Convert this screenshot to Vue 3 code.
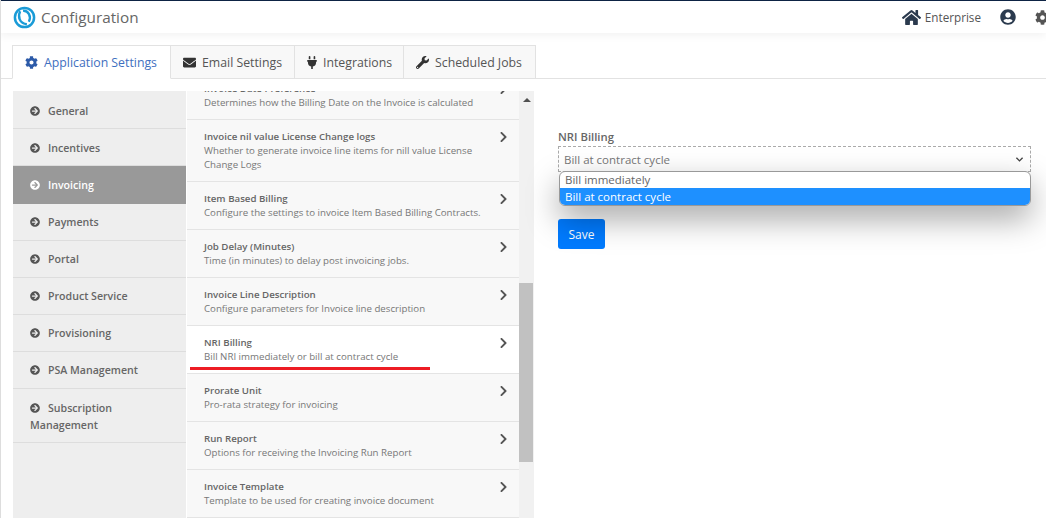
<template>
  <div class="page">
    <header class="topbar">
      <svg class="logo" viewBox="0 0 24 24" fill="none" stroke="#1a9bd7">
        <circle cx="12" cy="12" r="10" stroke-width="2.6" />
        <path d="M7.500 5.500C4.500 11 7 18.500 14.500 19" stroke-width="2.400" />
        <path d="M10.500 5C16 4.500 19.500 11 16.500 16.500" stroke-width="2.400" />
      </svg>
      <span class="brand">Configuration</span>
      <div class="topright">
        <svg class="ico home" :viewBox="icons.home.box"><path :d="icons.home.d" /></svg>
        <span class="org">Enterprise</span>
        <svg class="ico user" :viewBox="icons.user.box"><path :d="icons.user.d" /></svg>
        <svg class="ico gear" :viewBox="icons.cog.box"><path :d="icons.cog.d" /></svg>
      </div>
    </header>

    <nav class="tabs">
      <div v-for="t in tabs" :key="t.label" class="tab" :class="{ active: t.active }" :style="{ width: t.width + 'px' }">
        <svg class="ico tabico" :viewBox="icons[t.icon].box" :style="{ width: t.iconWidth + 'px' }"><path :d="icons[t.icon].d" /></svg>
        <span>{{ t.label }}</span>
      </div>
    </nav>

    <main class="content">
      <aside class="side">
        <div v-for="s in sections" :key="s.label" class="sideitem" :class="{ active: s.active }">
          <svg class="ico arrow" :viewBox="icons.arrow.box"><path :d="icons.arrow.d" /></svg>{{ s.label }}
        </div>
      </aside>

      <section class="listwrap">
        <div class="list">
          <div v-for="r in rows" :key="r.title" class="row" :class="{ current: r.current }">
            <div class="rowtext">
              <div class="rowtitle">{{ r.title }}</div>
              <div class="rowdesc">{{ r.desc }}</div>
            </div>
            <svg class="ico chev" :viewBox="icons.chev.box"><path :d="icons.chev.d" /></svg>
            <div v-if="r.current" class="redline"></div>
          </div>
        </div>
      </section>

      <div class="scrollbar">
        <div class="uparrow"></div>
        <div class="thumb"></div>
      </div>

      <section class="detail">
        <div class="label">NRI Billing</div>
        <div class="selectbox">
          <div class="select">
            <span>Bill at contract cycle</span>
            <svg class="caret" viewBox="0 0 16 16" fill="none" stroke="#444" stroke-width="2">
              <path d="M3.500 5.500 8 10l4.500-4.500" />
            </svg>
          </div>
          <div class="dropdown">
            <div class="opt">Bill immediately</div>
            <div class="opt picked">Bill at contract cycle</div>
          </div>
        </div>
        <button class="save">Save</button>
      </section>
    </main>
  </div>
</template>

<script setup>
const icons = {
  home: {
    box: "0 0 576 512",
    d: "M280.37 148.26L96 300.11V464a16 16 0 0 0 16 16l112.06-.29a16 16 0 0 0 15.92-16V368a16 16 0 0 1 16-16h64a16 16 0 0 1 16 16v95.64a16 16 0 0 0 16 16.05L464 480a16 16 0 0 0 16-16V300L295.67 148.26a12.19 12.19 0 0 0-15.3 0zM571.6 251.47L488 182.56V44.05a12 12 0 0 0-12-12h-56a12 12 0 0 0-12 12v72.61L318.47 43a48 48 0 0 0-61 0L4.34 251.47a12 12 0 0 0-1.6 16.9l25.5 31A12 12 0 0 0 45.15 301l235.22-193.74a12.19 12.19 0 0 1 15.3 0L530.9 301a12 12 0 0 0 16.9-1.6l25.5-31a12 12 0 0 0-1.7-16.93z",
  },
  user: {
    box: "0 0 496 512",
    d: "M248 8C111 8 0 119 0 256s111 248 248 248 248-111 248-248S385 8 248 8zm0 96c48.6 0 88 39.4 88 88s-39.4 88-88 88-88-39.4-88-88 39.4-88 88-88zm0 344c-58.7 0-111.3-26.6-146.5-68.2 18.8-35.4 55.6-59.8 98.5-59.8 2.4 0 4.8.4 7.1 1.1 13 4.2 26.6 6.9 40.9 6.9 14.3 0 28-2.7 40.9-6.9 2.3-.7 4.7-1.1 7.1-1.1 42.9 0 79.7 24.4 98.5 59.8C359.3 421.4 306.7 448 248 448z",
  },
  cog: {
    box: "0 0 512 512",
    d: "M487.4 315.7l-42.6-24.6c4.3-23.2 4.3-47 0-70.2l42.6-24.6c4.9-2.8 7.1-8.6 5.5-14-11.1-35.6-30-67.8-54.7-94.6-3.8-4.1-10-5.1-14.8-2.3L380.8 110c-17.9-15.4-38.5-27.3-60.8-35.1V25.8c0-5.6-3.9-10.5-9.4-11.7-36.7-8.2-74.3-7.8-109.2 0-5.5 1.2-9.4 6.1-9.4 11.7V75c-22.2 7.9-42.8 19.8-60.8 35.1L88.7 85.5c-4.9-2.8-11-1.9-14.8 2.3-24.7 26.7-43.6 58.9-54.7 94.6-1.7 5.4.6 11.2 5.5 14L67.3 221c-4.3 23.2-4.3 47 0 70.2l-42.6 24.6c-4.9 2.8-7.1 8.6-5.5 14 11.1 35.6 30 67.8 54.7 94.6 3.8 4.1 10 5.1 14.8 2.3l42.6-24.6c17.9 15.4 38.5 27.3 60.8 35.1v49.2c0 5.6 3.9 10.5 9.4 11.7 36.7 8.2 74.3 7.8 109.2 0 5.5-1.2 9.4-6.1 9.4-11.7v-49.2c22.2-7.9 42.8-19.8 60.8-35.1l42.6 24.6c4.9 2.8 11 1.9 14.8-2.3 24.7-26.7 43.6-58.9 54.7-94.6 1.5-5.5-.7-11.3-5.6-14.1zM256 336c-44.1 0-80-35.9-80-80s35.9-80 80-80 80 35.9 80 80-35.9 80-80 80z",
  },
  envelope: {
    box: "0 0 512 512",
    d: "M502.3 190.8c3.9-3.1 9.7-.2 9.7 4.7V400c0 26.5-21.5 48-48 48H48c-26.5 0-48-21.5-48-48V195.6c0-5 5.7-7.8 9.7-4.7 22.4 17.4 52.1 39.5 154.1 113.6 21.1 15.4 56.7 47.8 92.2 47.6 35.7.3 72-32.8 92.3-47.6 102-74.1 131.6-96.3 154-113.7zM256 320c23.2.4 56.6-29.2 73.4-41.4 132.7-96.3 142.8-104.7 173.4-128.7 5.8-4.5 9.2-11.5 9.2-18.9v-19c0-26.5-21.5-48-48-48H48C21.5 64 0 85.5 0 112v19c0 7.4 3.4 14.3 9.2 18.9 30.6 23.9 40.7 32.4 173.4 128.7 16.8 12.2 50.2 41.8 73.4 41.4z",
  },
  plug: {
    box: "0 0 384 512",
    d: "M320,32a32,32,0,0,0-64,0v96h64Zm48,128H16A16,16,0,0,0,0,176v32a16,16,0,0,0,16,16H32v32A160.07,160.07,0,0,0,160,412.8V512h64V412.8A160.07,160.07,0,0,0,352,256V224h16a16,16,0,0,0,16-16V176A16,16,0,0,0,368,160ZM128,32a32,32,0,0,0-64,0v96h64Z",
  },
  wrench: {
    box: "0 0 512 512",
    d: "M507.73 109.1c-2.24-9.03-13.54-12.09-20.12-5.51l-74.36 74.36-67.88-11.31-11.31-67.88 74.36-74.36c6.62-6.62 3.43-17.9-5.66-20.16-47.38-11.74-99.55.91-136.58 37.93-39.64 39.64-50.55 97.1-34.05 147.2L18.74 402.76c-24.99 24.99-24.99 65.51 0 90.5 24.99 24.99 65.51 24.99 90.5 0l213.21-213.21c50.12 16.71 107.47 5.68 147.37-34.22 37.07-37.07 49.7-89.32 37.91-136.73zM64 472c-13.25 0-24-10.75-24-24 0-13.26 10.75-24 24-24s24 10.74 24 24c0 13.25-10.75 24-24 24z",
  },
  arrow: {
    box: "0 0 512 512",
    d: "M256 8c137 0 248 111 248 248S393 504 256 504 8 393 8 256 119 8 256 8zm-28.9 143.6l75.5 72.4H120c-13.3 0-24 10.7-24 24v16c0 13.3 10.7 24 24 24h182.6l-75.5 72.4c-9.7 9.3-9.9 24.8-.4 34.3l11 10.9c9.4 9.4 24.6 9.4 33.9 0L404.3 273c9.4-9.4 9.4-24.6 0-33.9L271.6 106.3c-9.4-9.4-24.6-9.4-33.9 0l-11 10.9c-9.5 9.6-9.3 25.1.4 34.4z",
  },
  chev: {
    box: "0 0 320 512",
    d: "M285.476 272.971L91.132 467.314c-9.373 9.373-24.569 9.373-33.941 0l-22.667-22.667c-9.357-9.357-9.375-24.522-.04-33.901L188.505 256 34.484 101.255c-9.335-9.379-9.317-24.544.04-33.901l22.667-22.667c9.373-9.373 24.569-9.373 33.941 0L285.475 239.03c9.373 9.372 9.373 24.568.001 33.941z",
  },
};

const tabs = [
  { label: "Application Settings", icon: "cog", width: 159, iconWidth: 13, active: true },
  { label: "Email Settings", icon: "envelope", width: 124, iconWidth: 13 },
  { label: "Integrations", icon: "plug", width: 109, iconWidth: 10 },
  { label: "Scheduled Jobs", icon: "wrench", width: 132, iconWidth: 13 },
];

const sections = [
  { label: "General" },
  { label: "Incentives" },
  { label: "Invoicing", active: true },
  { label: "Payments" },
  { label: "Portal" },
  { label: "Product Service" },
  { label: "Provisioning" },
  { label: "PSA Management" },
  { label: "Subscription Management" },
];

const rows = [
  { title: "Invoice Date Preference", desc: "Determines how the Billing Date on the Invoice is calculated" },
  { title: "Invoice nil value License Change logs", desc: "Whether to generate invoice line items for nill value License Change Logs" },
  { title: "Item Based Billing", desc: "Configure the settings to invoice Item Based Billing Contracts." },
  { title: "Job Delay (Minutes)", desc: "Time (in minutes) to delay post invoicing jobs." },
  { title: "Invoice Line Description", desc: "Configure parameters for Invoice line description" },
  { title: "NRI Billing", desc: "Bill NRI immediately or bill at contract cycle", current: true },
  { title: "Prorate Unit", desc: "Pro-rata strategy for invoicing" },
  { title: "Run Report", desc: "Options for receiving the Invoicing Run Report" },
  { title: "Invoice Template", desc: "Template to be used for creating invoice document" },
];
</script>

<style>
html,
body {
  margin: 0;
  overflow: hidden;
  background: #fff;
}
</style>

<style scoped>
.page {
  width: 1046px;
  height: 518px;
  overflow: hidden;
  box-sizing: border-box;
  border-left: 1px solid #ddd;
  font-family: "Open Sans", sans-serif;
  color: #666;
  background: #fff;
}

.ico {
  fill: currentColor;
  flex: none;
}

.topbar {
  height: 32px;
  margin-left: -1px;
  border-top: 1px solid #0d2344;
  display: flex;
  align-items: center;
  padding-left: 13px;
  background: #fff;
  box-shadow: 0 3px 8px rgba(0, 0, 0, 0.05);
}

.logo {
  width: 23px;
  height: 23px;
  margin-right: 5px;
}

.brand {
  font-size: 15.300px;
  color: #666;
}

.topright {
  margin-left: auto;
  display: flex;
  align-items: center;
  color: #2b3a4e;
}

.home {
  width: 19px;
  height: 17px;
}

.org {
  margin-left: 4px;
  font-size: 11.700px;
  color: #555;
}

.user {
  width: 16px;
  height: 16px;
  margin-left: 19px;
}

.gear {
  width: 15px;
  height: 15px;
  margin-left: 19px;
  margin-right: -4px;
  color: #555;
}

.tabs {
  display: flex;
  height: 33px;
  margin-top: 12px;
  margin-left: -1px;
  padding-left: 12px;
  border-bottom: 1px solid #e2e2e2;
}

.tab {
  box-sizing: border-box;
  height: 34px;
  display: flex;
  align-items: center;
  gap: 6px;
  padding: 1px 0 0 12px;
  font-size: 12.300px;
  color: #555;
  background: #f8f8f8;
  border: 1px solid #e2e2e2;
  border-left: 0;
}

.tab:first-child {
  border-left: 1px solid #e2e2e2;
}

.tab.active {
  background: #fff;
  color: #3f6fc0;
  border-bottom-color: #fff;
}

.tab.active .tabico {
  color: #2c5aa8;
}

.tabico {
  height: 13px;
  color: #333;
}

.content {
  display: flex;
  height: 427px;
  margin-top: 12px;
  margin-left: 12px;
}

.side {
  width: 173px;
  background: #eee;
  flex: none;
}

.sideitem {
  padding: 9.500px 17px;
  line-height: 17px;
  font-size: 10.600px;
  font-weight: 600;
  color: #666;
  border-bottom: 1px solid #ddd;
}

.sideitem:first-child {
  padding-top: 11.500px;
  padding-bottom: 8.500px;
}

.sideitem:nth-child(2),
.sideitem:last-child {
  padding-top: 10.500px;
  padding-bottom: 8.500px;
}

.sideitem.active {
  background: #999;
  color: #fff;
  padding-top: 10.500px;
  border-bottom: 0;
  padding-bottom: 10.500px;
}

.arrow {
  width: 10px;
  height: 10px;
  margin-right: 8px;
  vertical-align: -1px;
  color: #555;
}

.active .arrow {
  color: #fff;
}

.listwrap {
  width: 332px;
  margin-left: 1px;
  overflow: hidden;
  flex: none;
}

.list {
  margin-top: -19px;
}

.row {
  position: relative;
  display: flex;
  justify-content: space-between;
  padding: 10px 11px 9px 17px;
  background: #f8f8f8;
  border-bottom: 1px solid #e4e4e4;
  box-sizing: border-box;
  min-height: 48px;
}

.row.current {
  background: #fff;
}

.rowtext {
  width: 280px;
}

.rowtitle {
  font-size: 9.700px;
  font-weight: 600;
  line-height: 14px;
  color: #666;
}

.rowdesc {
  font-size: 9.700px;
  line-height: 14px;
  color: #777;
}

.chev {
  width: 9px;
  height: 12px;
  margin-top: 1px;
  color: #555;
}

.redline {
  position: absolute;
  left: 3px;
  top: 41px;
  width: 240px;
  height: 2.500px;
  background: #ed1c24;
}

.scrollbar {
  position: relative;
  width: 15px;
  background: #f1f1f1;
  flex: none;
}

.uparrow {
  position: absolute;
  left: 4px;
  top: 7px;
  border: 4px solid transparent;
  border-top: 0;
  border-bottom: 4px solid #505050;
}

.thumb {
  position: absolute;
  left: 0;
  top: 192px;
  width: 14px;
  height: 179px;
  background: #c1c1c1;
}

.detail {
  flex: 1;
  padding: 38px 0 0 24px;
}

.label {
  font-size: 11.300px;
  line-height: 16px;
  font-weight: 600;
  color: #666;
}

.selectbox {
  position: relative;
  width: 473px;
  margin-bottom: 47px;
}

.select {
  box-sizing: border-box;
  height: 26px;
  padding: 0 5px;
  display: flex;
  align-items: center;
  justify-content: space-between;
  border: 1px dashed #aaa;
  font-size: 11.500px;
  color: #777;
  margin-top: 1px;
}

.caret {
  width: 11px;
  height: 11px;
}

.dropdown {
  position: absolute;
  left: 1px;
  right: 0;
  top: 25px;
  border: 1px solid #999;
  border-radius: 6px;
  overflow: hidden;
  background: #fff;
  box-shadow: 0 13px 32px rgba(0, 0, 0, 0.35);
  font-size: 11.500px;
  line-height: 16px;
  color: #666;
}

.opt {
  padding: 0 5px;
}

.opt.picked {
  background: #1e90ff;
  color: #fff;
  padding-top: 1px;
}

.save {
  display: block;
  width: 47px;
  height: 30px;
  padding: 0;
  border: 0;
  border-radius: 3px;
  background: #007bff;
  color: #fff;
  font-family: inherit;
  font-size: 12px;
}
</style>
